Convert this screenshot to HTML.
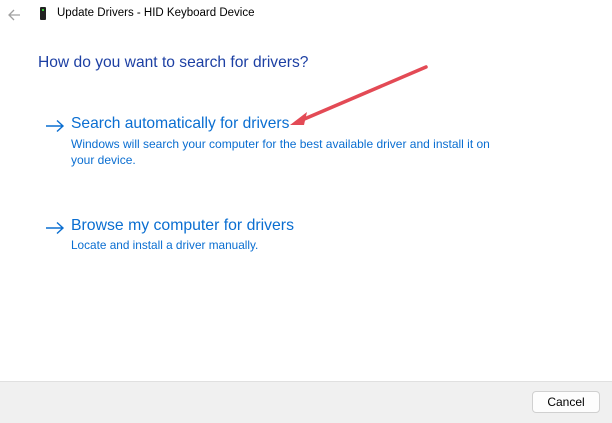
<!DOCTYPE html>
<html><head><meta charset="utf-8"><style>
html,body{margin:0;padding:0}
body{width:612px;height:422px;background:#fff;position:relative;overflow:hidden;font-family:"Liberation Sans",sans-serif}
.t{position:absolute;white-space:nowrap}
</style></head><body>
<svg class="t" style="left:7px;top:8px" width="14" height="14" viewBox="0 0 14 14"><path d="M13 7H2M7 2L2 7l5 5" fill="none" stroke="#a0a0a0" stroke-width="1.3"/></svg>
<div class="t" style="left:40px;top:7px;width:6px;height:13px;background:#222;border-radius:1px"></div>
<div class="t" style="left:42px;top:9px;width:2px;height:2px;background:#3c3"></div>
<div class="t" style="left:57px;top:7px;font-size:11.5px;color:#000">Update Drivers - HID Keyboard Device</div>
<div class="t" style="left:38px;top:54px;font-size:15.6px;color:#1c3fa3">How do you want to search for drivers?</div>
<svg class="t" style="left:45px;top:119px" width="20" height="14" viewBox="0 0 20 14"><path d="M1 7h17M12 1.5L18 7l-6 5.5" fill="none" stroke="#0a6ed1" stroke-width="1.4"/></svg>
<div class="t" style="left:71px;top:115px;font-size:15.6px;color:#0a6ed1">Search automatically for drivers</div>
<div class="t" style="left:71px;top:136px;font-size:12px;line-height:16px;color:#0a6ed1">Windows will search your computer for the best available driver and install it on<br>your device.</div>
<svg class="t" style="left:45px;top:221px" width="20" height="14" viewBox="0 0 20 14"><path d="M1 7h17M12 1.5L18 7l-6 5.5" fill="none" stroke="#0a6ed1" stroke-width="1.4"/></svg>
<div class="t" style="left:71px;top:217px;font-size:15.8px;color:#0a6ed1">Browse my computer for drivers</div>
<div class="t" style="left:71px;top:238px;font-size:11.8px;color:#0a6ed1">Locate and install a driver manually.</div>
<svg class="t" style="left:0;top:0" width="612" height="200"><line x1="426" y1="67" x2="302" y2="120" stroke="#e34a55" stroke-width="3.5" stroke-linecap="round"/><path d="M290 125L307 112L304 125Z" fill="#e34a55"/></svg>
<div class="t" style="left:0;top:381px;width:612px;height:41px;background:#f0f0f0;border-top:1px solid #e0e0e0"></div>
<div class="t" style="left:532px;top:391px;width:66px;height:20px;background:#fdfdfd;border:1px solid #d0d0d0;border-radius:4px;font-size:12px;line-height:20px;text-align:center;color:#000">Cancel</div>
</body></html>
